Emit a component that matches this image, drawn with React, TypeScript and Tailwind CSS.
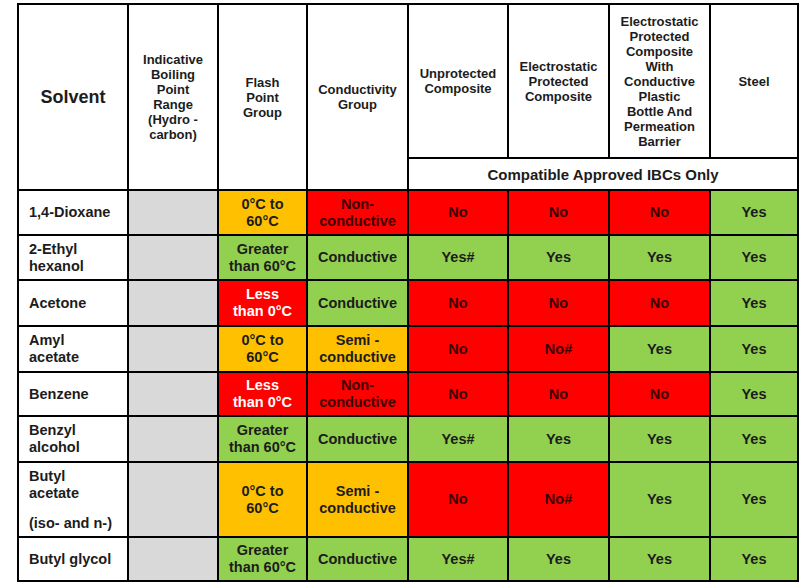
import React from "react";

type Tone = "red" | "green" | "orange";

const toneClass: Record<Tone, string> = {
  red: "bg-[#ff0000] text-[#3d0000]",
  green: "bg-[#92d050] text-[#1c1c1c]",
  orange: "bg-[#ffc000] text-[#1c1c1c]",
};

type Cell = { text: React.ReactNode; tone: Tone; white?: boolean };

const zeroTo60: Cell = { text: <>0°C to<br />60°C</>, tone: "orange" };
const over60: Cell = { text: <>Greater<br />than 60°C</>, tone: "green" };
const under0: Cell = { text: <>Less<br />than 0°C</>, tone: "red", white: true };
const nonCond: Cell = { text: <>Non-<br />conductive</>, tone: "red" };
const cond: Cell = { text: "Conductive", tone: "green" };
const semi: Cell = { text: <>Semi -<br />conductive</>, tone: "orange" };
const no: Cell = { text: "No", tone: "red" };
const noHash: Cell = { text: "No#", tone: "red" };
const yes: Cell = { text: "Yes", tone: "green" };
const yesHash: Cell = { text: "Yes#", tone: "green" };

const rows: { name: React.ReactNode; cells: Cell[] }[] = [
  { name: "1,4-Dioxane", cells: [zeroTo60, nonCond, no, no, no, yes] },
  { name: <>2-Ethyl<br />hexanol</>, cells: [over60, cond, yesHash, yes, yes, yes] },
  { name: "Acetone", cells: [under0, cond, no, no, no, yes] },
  { name: <>Amyl<br />acetate</>, cells: [zeroTo60, semi, no, noHash, yes, yes] },
  { name: "Benzene", cells: [under0, nonCond, no, no, no, yes] },
  { name: <>Benzyl<br />alcohol</>, cells: [over60, cond, yesHash, yes, yes, yes] },
  {
    name: (
      <>
        <div>Butyl<br />acetate</div>
        <div className="mt-[13px]">(iso- and n-)</div>
      </>
    ),
    cells: [zeroTo60, semi, no, noHash, yes, yes],
  },
  { name: "Butyl glycol", cells: [over60, cond, yesHash, yes, yes, yes] },
];

const head = "bg-white flex items-center justify-center text-center text-[13px] leading-[15px] font-bold text-[#1c1c1c]";

export default function App() {
  return (
    <div className="min-h-[583px] bg-white pt-[3px] pl-[17px] font-['Liberation_Sans',Arial,sans-serif]">
      <div className="grid w-fit bg-black p-[2px] gap-[2px] grid-cols-[108px_88px_87px_99px_98px_99px_99px_86px] grid-rows-[152px_30px_43px_43px_44px_44px_42px_44px_73px_42px]">
        <div className={`${head} row-span-2 text-[18px] leading-[20px]`}>Solvent</div>
        <div className={`${head} row-span-2`}>
          Indicative<br />Boiling<br />Point<br />Range<br />(Hydro -<br />carbon)
        </div>
        <div className={`${head} row-span-2`}>
          Flash<br />Point<br />Group
        </div>
        <div className={`${head} row-span-2`}>
          Conductivity<br />Group
        </div>
        <div className={head}>
          Unprotected<br />Composite
        </div>
        <div className={head}>
          Electrostatic<br />Protected<br />Composite
        </div>
        <div className={head}>
          Electrostatic<br />Protected<br />Composite<br />With<br />Conductive<br />Plastic<br />Bottle And<br />Permeation<br />Barrier
        </div>
        <div className={head}>Steel</div>
        <div className={`${head} col-span-4 text-[15px] leading-[17px]`}>
          Compatible Approved IBCs Only
        </div>

        {rows.map((row, i) => (
          <React.Fragment key={i}>
            <div className="bg-white flex flex-col justify-center pl-[10px] text-[14.5px] leading-[17px] font-bold text-[#1c1c1c]">
              <div>{row.name}</div>
            </div>
            <div className="bg-[#d9d9d9]" />
            {row.cells.map((c, j) => (
              <div
                key={j}
                className={`flex items-center justify-center text-center text-[14.5px] leading-[17px] font-bold ${toneClass[c.tone]} ${c.white ? "text-white" : ""}`}
              >
                <div>{c.text}</div>
              </div>
            ))}
          </React.Fragment>
        ))}
      </div>
    </div>
  );
}
